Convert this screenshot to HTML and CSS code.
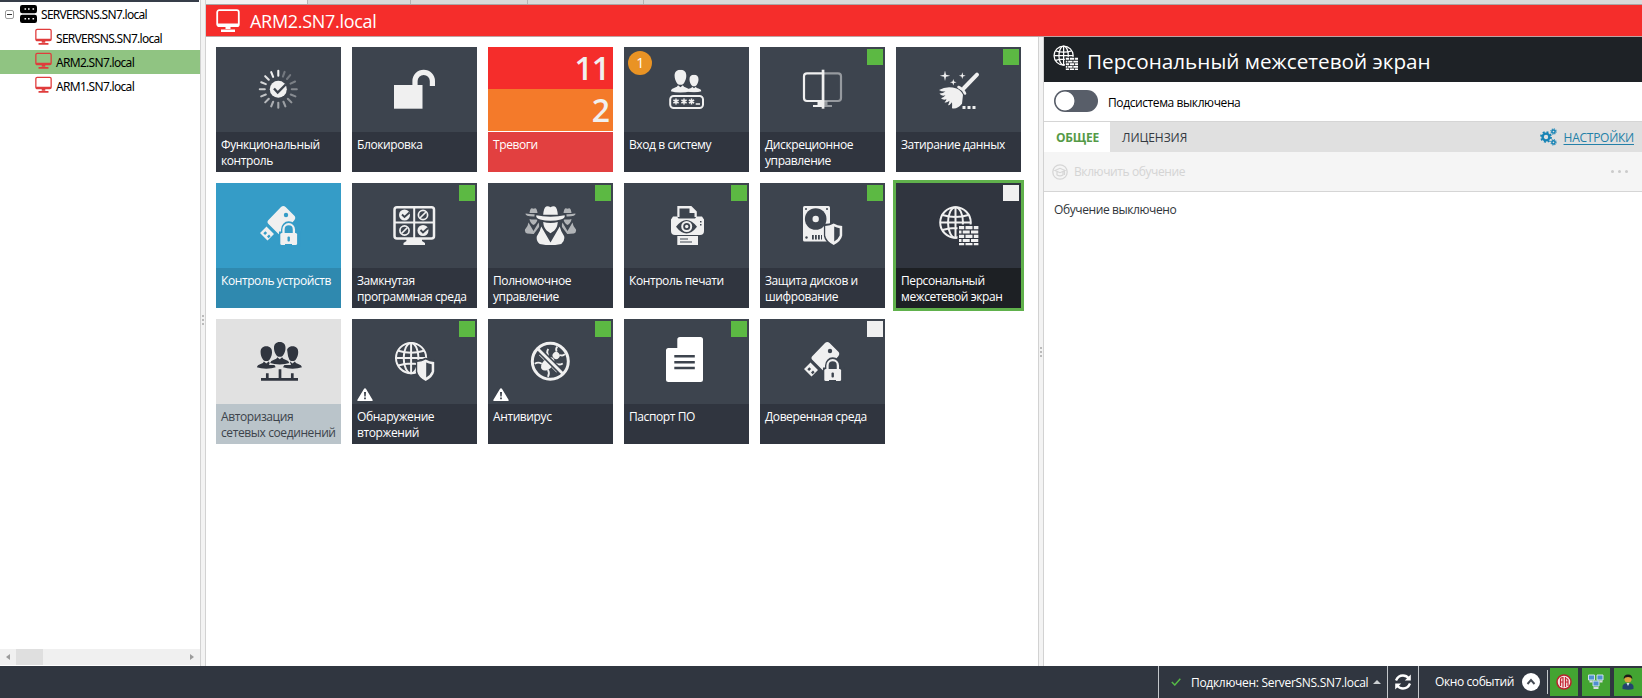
FILE: index.html
```html
<!DOCTYPE html>
<html lang="ru">
<head>
<meta charset="utf-8">
<title>ARM2.SN7.local</title>
<link rel="stylesheet" href="styles.css">
</head>
<body>
<svg class="defs" width="0" height="0">
  <symbol id="monitor" viewBox="0 0 24 24">
    <rect x="1.2" y="1.2" width="21.6" height="16" rx="2" fill="none" stroke="currentColor" stroke-width="1.8"/>
    <path d="M1.5 14.500h21v2l-1 1h-19l-1-1zM9.500 17h5v3h-5zM5 20.500h14v2.500H5z" fill="currentColor"/>
  </symbol>
  <symbol id="usb" viewBox="0 0 125 85">
    <path d="M52 37.500 65 24q2.300-2 4.600 0l9 9q1.500 2-.500 4.500L65.500 51q-1.500 1-3 0L52 40.500q-1.300-1.500 0-3zM44 50l6.500-6.500L58 51l-6.500 6.500z" fill="currentColor"/>
    <circle cx="70" cy="32" r="2.200" fill="var(--bg)"/>
    <path d="m47.300 50.200 2-2 1.800 1.800-2 2zM51 53.600l2-2 1.600 1.600-2 2z" fill="var(--bg)"/>
    <path d="M63 48.500h2v-2a7.700 8.300 0 0 1 15.400 0v2h4v15H62.500z" fill="var(--bg)"/>
    <path d="M67.500 51v-4.500a5.200 5.300 0 0 1 10.400 0V51" fill="none" stroke="currentColor" stroke-width="2.300"/>
    <rect x="64.300" y="50" width="16.800" height="12" rx="1.500" fill="currentColor"/>
    <rect x="71.500" y="53.500" width="2.400" height="5" rx="1" fill="var(--bg)"/>
    <path d="M69 61h7v2h-7z" fill="var(--bg)"/>
  </symbol>
  <symbol id="globe" viewBox="0 0 40 40">
    <g fill="none" stroke="currentColor" stroke-width="2">
      <circle cx="17" cy="17" r="15.300"/>
      <ellipse cx="17" cy="17" rx="7.500" ry="15.300"/>
      <path d="M17 2v30M2 17h30M4 9.500q13 4 26 0M4 24.500q13-4 26 0"/>
    </g>
  </symbol>
  <symbol id="shield" viewBox="0 0 20 25">
    <path d="M0 2.500Q6 2.500 10 0q4 2.500 10 2.500V14q-1 7-10 11Q1 21 0 14z" fill="var(--bg)"/>
    <path d="M1.500 4.500Q6.500 4 10 2q3.500 2 8.500 2.500V14q-1 5.500-8.500 9.500Q2.500 19.500 1.500 14z" fill="currentColor"/>
    <path d="M10.500 5q2.500 1.200 5.500 1.700V14q-1 3-5.500 6z" fill="var(--bg)"/>
  </symbol>
  <symbol id="firewall" viewBox="0 0 40 40">
    <use href="#globe" width="40" height="40"/>
    <path d="M19 19h21v21H19z" fill="var(--bg)"/>
    <path d="M20.500 20.500h5.200v3.200h-5.200zM27 20.500h7v3.200h-7zM35.300 20.500h5v3.200h-5zM20.500 25h2.500v3h-2.500zM24.200 25h7v3h-7zM32.500 25h7.500v3h-7.500zM20.500 29.200h5.200v3.200h-5.200zM27 29.200h7v3.200h-7zM35.300 29.200h5v3.200h-5zM20.500 33.600h2.500v2.800h-2.500zM24.200 33.600h7v2.800h-7zM32.500 33.600h7.500v2.800h-7.500zM20.500 37.500h5.200V40h-5.200zM27 37.500h7V40h-7zM35.300 37.500h5V40h-5z" fill="currentColor"/>
  </symbol>
  <symbol id="warn" viewBox="0 0 16 13">
    <path d="M8 .300q.700 0 1.100.800L15.700 12q.300 1-.700 1H1q-1 0-.700-1L6.900 1.100Q7.300.300 8 .300z" fill="#fff"/>
    <path d="M7 4h2l-.300 4.500H7.300zM7.100 9.500h1.800v1.800H7.100z" fill="#3d434d"/>
  </symbol>
  <symbol id="person" viewBox="0 0 20 24">
    <path d="M10 0c4 0 6.200 2.500 6 6.500 0 2.500-1 5-2 6.500-.800 1.500-1.800 2.500-4 2.500S6.800 14.500 6 13C5 11.500 4 9 4 6.500 3.800 2.500 6 0 10 0z"/>
    <path d="M0 22q.500-2.500 4-3.500 3-.700 3.500-2.500l2.500 2 2.500-2q.500 1.800 3.500 2.500 3.500 1 4 3.500-4 1.500-10 1.500T0 22z"/>
  </symbol>
  <symbol id="spy" viewBox="0 0 30 40">
    <path d="M7.500 9q.500-7 3-8.500 2.500-.500 4.500.700 2-1.200 4.500-.7 2.500 1.500 3 8.500z"/>
    <path d="M.500 9.500q6 1.500 14.500 1.500t14.500-1.500q1 3-4 4.300Q21 15 15 15T4.500 13.800Q-.500 12.500.5 9.500z"/>
    <path d="M7.500 16.500q7.500 1.800 15 0-.500 6-3.500 8.500L15 28l-4-3q-3-2.500-3.500-8.500z"/>
    <path d="M5.500 21 15 37.500 24.500 21q1 5 4.500 10 1 5-3 8-11 2.500-22 0-4-3-3-8 3.500-5 4.500-10z"/>
  </symbol>
  <symbol id="spy-side" viewBox="0 0 20 26">
    <path d="M6 5q.500-4 2-4.700 1.500 0 2 .5.500-.5 2-.5Q13.500 1 14 5z"/>
    <path d="M2 5.500q8 1.500 16 0 .500 3-8 3T2 5.500zM6 11q4 1.200 8 0-.5 4-4 6-3.500-2-4-6z"/>
    <path d="M5 14.500 10 23l5-8.500q.500 4 3.500 7 .500 3.500-2 4-6.500.8-13 0-2.500-.5-2-4 3-3 3.500-7z"/>
  </symbol>
  <symbol id="ban" viewBox="0 0 12 12"><circle cx="6" cy="6" r="4.600" fill="none" stroke="currentColor" stroke-width="1.700"/><path d="m3 9 6-6" stroke="currentColor" stroke-width="1.700"/></symbol>
  <symbol id="ok" viewBox="0 0 12 12"><circle cx="6" cy="6" r="5.500" fill="currentColor"/><path d="m3.500 5.500 2.500 2.500L11 3.500" fill="none" stroke="var(--bg)" stroke-width="1.900"/></symbol>
</svg>

<div class="app">
  <div class="workspace">
    <aside class="tree">
      <div class="tree-cap"></div>
      <ul class="tree-list">
        <li class="node root"><span class="expander"></span>
          <svg class="server" viewBox="0 0 17 18"><rect width="17" height="8.300" rx="2.200"/><rect y="9.700" width="17" height="8.300" rx="2.200"/><path d="M4.500 4h1.600M8 4h1.600M12.500 4h1.600M4.500 13.800h1.600M8 13.800h1.600M12.500 13.800h1.600" stroke="#fff" stroke-width="1.500"/></svg>
          <span>SERVERSNS.SN7.local</span></li>
        <li class="node"><svg class="pc"><use href="#monitor"/></svg><span>SERVERSNS.SN7.local</span></li>
        <li class="node selected"><svg class="pc"><use href="#monitor"/></svg><span>ARM2.SN7.local</span></li>
        <li class="node"><svg class="pc"><use href="#monitor"/></svg><span>ARM1.SN7.local</span></li>
      </ul>
      <div class="scroll"><i class="arrow-left"></i><i class="thumb"></i><i class="arrow-right"></i></div>
    </aside>
    <div class="splitter left-splitter"><i></i><i></i><i></i></div>

    <div class="main">
      <div class="top-tabs"><i class="t1"></i><i class="t2"></i><i class="t3"></i><i class="t4"></i></div>
      <header class="host"><svg class="host-icon"><use href="#monitor"/></svg><span>ARM2.SN7.local</span></header>
      <div class="content">
        <section class="tiles">
          <div class="tile"><div class="face"><svg class="icon" viewBox="0 0 125 85">
            <g stroke="currentColor" stroke-width="2.100" stroke-linecap="round" transform="translate(62.300 42.300)">
              <path d="M0-13.500V-18.500"/><path d="M0-13.500V-18.500" transform="rotate(20)" opacity=".3"/><path d="M0-13.500V-18.500" transform="rotate(40)" opacity=".3"/><path d="M0-13.500V-18.500" transform="rotate(65)" opacity=".35"/><path d="M0-13.500V-18.500" transform="rotate(90)" opacity=".4"/><path d="M0-13.500V-18.500" transform="rotate(112.500)" opacity=".42"/><path d="M0-13.500V-18.500" transform="rotate(135)" opacity=".48"/><path d="M0-13.500V-18.500" transform="rotate(157.500)" opacity=".52"/><path d="M0-13.500V-18.500" transform="rotate(180)" opacity=".58"/><path d="M0-13.500V-18.500" transform="rotate(202.500)" opacity=".62"/><path d="M0-13.500V-18.500" transform="rotate(225)" opacity=".68"/><path d="M0-13.500V-18.500" transform="rotate(247.500)" opacity=".74"/><path d="M0-13.500V-18.500" transform="rotate(270)" opacity=".8"/><path d="M0-13.500V-18.500" transform="rotate(292.500)" opacity=".86"/><path d="M0-13.500V-18.500" transform="rotate(315)" opacity=".92"/><path d="M0-13.500V-18.500" transform="rotate(337.500)"/>
            </g>
            <circle cx="62.300" cy="42.300" r="8.500" fill="currentColor"/><path d="m58 41.500 3.700 4 8-8" fill="none" stroke="var(--bg)" stroke-width="2.400"/>
          </svg></div><div class="label">Функциональный<br>контроль</div></div>

          <div class="tile"><div class="face"><svg class="icon" viewBox="0 0 125 85">
            <path d="M42 38h28.500v23.700H42z" fill="currentColor"/><path d="M63 38.500V34a8.700 8.700 0 0 1 17.400 0v5" fill="none" stroke="currentColor" stroke-width="5.200"/>
          </svg></div><div class="label">Блокировка</div></div>

          <div class="tile alarms"><div class="count high">11</div><div class="count mid">2</div><div class="label">Тревоги</div></div>

          <div class="tile"><div class="face"><span class="badge">1</span><svg class="icon" viewBox="0 0 125 85" fill="currentColor">
            <use href="#person" x="46.700" y="22.700" width="19.500" height="23.400"/>
            <use href="#person" x="62.500" y="27.500" width="15" height="18.300"/>
            <rect x="46.200" y="49" width="32.800" height="12" rx="3.500" fill="none" stroke="currentColor" stroke-width="2"/>
            <path d="M52 51.500v6M49.400 53l5.200 3M49.400 56l5.200-3M60 51.500v6M57.400 53l5.200 3M57.400 56l5.200-3M67.500 51.500v6M64.900 53l5.200 3M64.900 56l5.200-3M71.700 57h4.300" stroke="currentColor" stroke-width="1.500"/>
          </svg></div><div class="label">Вход в систему</div></div>

          <div class="tile"><div class="face"><span class="flag"></span><svg class="icon" viewBox="0 0 125 85">
            <g fill="none" stroke="currentColor"><path d="M63 26.300H47a3 3 0 0 0-3 3V51a3 3 0 0 0 3 3h16" stroke-width="2.200"/><path d="M63 26.300h15a3 3 0 0 1 3 3V51a3 3 0 0 1-3 3H63" stroke-width="2.200" opacity=".5"/></g>
            <path d="M57.500 54.500H63V60H53v-2h4.500z" fill="currentColor"/><path d="M63 54.500h4.500V58H72v2h-9z" fill="currentColor" opacity=".5"/><path d="M61.700 22.700h2.700v39h-2.700z" fill="currentColor"/>
          </svg></div><div class="label">Дискреционное<br>управление</div></div>

          <div class="tile"><div class="face"><span class="flag"></span><svg class="icon" viewBox="0 0 125 85" fill="currentColor">
            <path d="m68 41 13-13.300" stroke="currentColor" stroke-width="4" stroke-linecap="round"/>
            <path d="M62.500 40q4.500 2 6.500 6.500" fill="none" stroke="currentColor" stroke-width="2.600" stroke-linecap="round"/>
            <path d="M60.500 41.500Q51 38.500 43 43q3 2 6.500 1.500-2.500 2-6 2 1.500 3 6 1.800-1.500 2-4.500 3 2 2 5.500 1-.5 2-2 3 2 1 5-1.500-.5 3-1.500 4.500 2 0 4-3 .3 3 0 6 5 1.500 10-4.500.5-4.500 1-9-2-4.500-6.500-6.300z"/>
            <path d="M49 23.500l1 4.200 4.200 1-4.200 1-1 4.200-1-4.200-4.200-1 4.200-1zM57.300 32l.8 2.500 2.500.8-2.500.8-.8 2.500-.8-2.500-2.500-.8 2.500-.8zM66.300 25.300l.8 2.600 2.600.8-2.600.8-.8 2.600-.8-2.600-2.600-.8 2.600-.8zM66.500 59h3v3h-3zM71.500 59h3v3h-3zM76.500 59h3v3h-3z"/>
          </svg></div><div class="label">Затирание данных</div></div>

          <div class="tile blue"><div class="face"><svg class="icon"><use href="#usb"/></svg></div><div class="label">Контроль устройств</div></div>

          <div class="tile"><div class="face"><span class="flag"></span><svg class="icon" viewBox="0 0 125 85">
            <rect x="42.500" y="24.200" width="39.500" height="31.300" rx="2.500" fill="none" stroke="currentColor" stroke-width="2.500"/><path d="M62.200 24v31M42 39.500h40" stroke="currentColor" stroke-width="2"/><path d="M54 55h16v3l3 2v2H51.500v-2l3-2z" fill="currentColor"/>
            <use href="#ok" x="46.500" y="26" width="12" height="12"/><use href="#ban" x="65" y="26" width="12" height="12"/><use href="#ban" x="46.500" y="41.500" width="12" height="12"/><use href="#ok" x="65" y="41.500" width="12" height="12"/>
          </svg></div><div class="label">Замкнутая<br>программная среда</div></div>

          <div class="tile"><div class="face"><span class="flag"></span><svg class="icon" viewBox="0 0 125 85" fill="currentColor">
            <g opacity=".65"><use href="#spy-side" x="35.500" y="25" width="20" height="26"/><use href="#spy-side" x="69.500" y="25" width="20" height="26"/></g>
            <path d="M54 23h17l1.500 7 6 1v4.500L73 38l1 6 6 8v10H45V52l6-8 1-6-5.500-2.500V31l6-1z" fill="var(--bg)"/>
            <use href="#spy" x="47.500" y="23" width="30" height="39"/>
          </svg></div><div class="label">Полномочное<br>управление</div></div>

          <div class="tile"><div class="face"><span class="flag"></span><svg class="icon" viewBox="0 0 125 85">
            <path d="M53.300 23h14l5.500 5.500V34H53.300z" fill="currentColor"/><path d="M55.500 25.500h10v4.500h5V35h-15z" fill="var(--bg)"/>
            <path d="M49 33.500h4l1.500 2h16.500l1.500-2H78l2 3V48q0 4-4 4H51q-4 0-4-4V36.500z" fill="currentColor"/>
            <path d="M52 43.700q10.500-13.500 21 0-10.500 13.500-21 0z" fill="var(--bg)"/><circle cx="62.700" cy="43.500" r="4.500" fill="none" stroke="currentColor" stroke-width="2"/><circle cx="62.700" cy="43.500" r="1.700" fill="currentColor"/><path d="M76 38h1.500v1.500H76zM76 41h1.500v1.500H76z" fill="var(--bg)"/>
            <path d="M53.300 53h20.700v9H53.300z" fill="currentColor"/><path d="M56 56h8M56 59h12" stroke="var(--bg)" stroke-width="1.200"/>
          </svg></div><div class="label">Контроль печати</div></div>

          <div class="tile"><div class="face"><span class="flag"></span><svg class="icon" viewBox="0 0 125 85">
            <rect x="43" y="23" width="27" height="35.500" rx="1.500" fill="currentColor"/><g fill="var(--bg)"><circle cx="55.700" cy="36" r="10.800"/><circle cx="46" cy="26" r="1"/><circle cx="67" cy="26" r="1"/><circle cx="46.500" cy="54.500" r="1.200"/><path d="M52 52h1.800v4.500H52zM55 52h1.800v4.500H55zM58 52h1.800v4.500H58zM61 52h1v4.500h-1z"/></g><circle cx="55.700" cy="36" r="3.200" fill="currentColor"/>
            <use href="#shield" x="63.700" y="38.500" width="20" height="25"/>
          </svg></div><div class="label">Защита дисков и<br>шифрование</div></div>

          <div class="tile current"><div class="face"><span class="flag off"></span><svg class="icon" viewBox="0 0 125 85"><use href="#firewall" x="42.500" y="22.500" width="40" height="40"/></svg></div><div class="label">Персональный<br>межсетевой экран</div></div>

          <div class="tile light"><div class="face"><svg class="icon" viewBox="0 0 125 85" fill="currentColor">
            <use href="#person" x="40.800" y="27" width="19" height="23.500"/><use href="#person" x="67" y="27" width="19" height="23.500"/>
            <path d="M58 23h12l2 14 3 9H53l3-9z" fill="var(--bg)"/><use href="#person" x="54" y="23" width="19.500" height="23"/>
            <path d="M45 60.300h37M51.300 54.300v6M64 50.300v10M76.300 54.300v6" fill="none" stroke="currentColor" stroke-width="2.700"/>
          </svg></div><div class="label">Авторизация<br>сетевых соединений</div></div>

          <div class="tile"><div class="face"><span class="flag"></span><svg class="warn"><use href="#warn"/></svg><svg class="icon" viewBox="0 0 125 85"><use href="#globe" x="42.300" y="22.300" width="39.500" height="39.500"/><use href="#shield" x="63.700" y="38.500" width="20" height="25"/></svg></div><div class="label">Обнаружение<br>вторжений</div></div>

          <div class="tile"><div class="face"><span class="flag"></span><svg class="warn"><use href="#warn"/></svg><svg class="icon" viewBox="0 0 125 85">
            <g transform="rotate(45 62.300 42.300)" fill="currentColor"><ellipse cx="62.300" cy="46" rx="5" ry="8"/><ellipse cx="62.300" cy="34" rx="3.600" ry="3.500"/><path d="M60 31q-3-1-3-4M64.600 31q3-1 3-4M57 40q-4-1-5-5M67.600 40q4-1 5-5M57 45h-7M67.600 45h7M58 50q-4 1-5 5M66.600 50q4 1 5 5" fill="none" stroke="currentColor" stroke-width="1.800"/></g>
            <path d="m49 29 26.600 26.600" stroke="var(--bg)" stroke-width="6"/>
            <circle cx="62.300" cy="42.300" r="18" fill="none" stroke="currentColor" stroke-width="3"/><path d="m49.500 29.500 25.600 25.600" stroke="currentColor" stroke-width="2.800"/>
          </svg></div><div class="label">Антивирус</div></div>

          <div class="tile"><div class="face"><span class="flag"></span><svg class="icon" viewBox="0 0 125 85">
            <path d="M56 18h20.500q2.500 0 2.500 2.500v40q0 2.500-2.500 2.500h-32Q42 63 42 60.500v-29Q42 29 44.500 29H53.300v-8.300Q53.300 18 56 18z" fill="#fff"/><path d="M50.300 37.300h20.500M50.300 43.300h20.500M50.300 49h20.500" stroke="var(--bg)" stroke-width="2.600"/>
          </svg></div><div class="label">Паспорт ПО</div></div>

          <div class="tile"><div class="face"><span class="flag off"></span><svg class="icon"><use href="#usb"/></svg></div><div class="label">Доверенная среда</div></div>
        </section>

        <div class="splitter"><i></i><i></i><i></i></div>

        <section class="details">
          <h1 class="details-head"><svg class="head-icon"><use href="#firewall"/></svg><span>Персональный межсетевой экран</span></h1>
          <div class="switch-row"><span class="toggle"></span><span>Подсистема выключена</span></div>
          <nav class="tabs"><span class="tab active">ОБЩЕЕ</span><span class="tab">ЛИЦЕНЗИЯ</span>
            <svg class="gears" viewBox="0 0 17 18" fill="none" stroke="#1783b5"><circle cx="6" cy="9" r="3.400" stroke-width="2.400"/><circle cx="6" cy="9" r="5" stroke-width="1.800" stroke-dasharray="1.960"/><circle cx="13.500" cy="3.500" r="1.600" stroke-width="1.500"/><circle cx="13.500" cy="3.500" r="2.600" stroke-width="1.200" stroke-dasharray="1.020"/><circle cx="13.500" cy="14.300" r="1.600" stroke-width="1.500"/><circle cx="13.500" cy="14.300" r="2.600" stroke-width="1.200" stroke-dasharray="1.020"/></svg>
            <a class="settings">НАСТРОЙКИ</a></nav>
          <div class="toolbar"><svg class="learn" viewBox="0 0 16 16" fill="none" stroke="#d6d6d6"><circle cx="8" cy="8" r="7.200" stroke-width="1.300"/><path d="m3 6.500 5-2.200 5 2.200-5 2.200zM5 8v3q3 1.700 6 0V8M12.500 7v4" stroke-width="1.200"/></svg><span>Включить обучение</span><span class="more"><i></i><i></i><i></i></span></div>
          <p class="note">Обучение выключено</p>
        </section>
      </div>
    </div>
  </div>

  <footer class="status">
    <div class="conn"><svg class="check" viewBox="0 0 10 8"><path d="m.800 4 3 3L9.300.800" fill="none" stroke="#56b947" stroke-width="1.500"/></svg><span class="conn-text">Подключен: ServerSNS.SN7.local</span><i class="up"></i></div>
    <div class="refresh"><svg viewBox="0 0 18 16" fill="none" stroke="#fff" stroke-width="2.300"><path d="M2 6.500Q4 1.500 9 1.500q3.500 0 6 3M16 9.500q-2 5-7 5-3.500 0-6-3"/><path d="M16.800.500v6h-6zM1.200 15.500v-6h6z" fill="#fff" stroke="none"/></svg></div>
    <div class="events"><span class="events-text">Окно событий</span><svg class="round" viewBox="0 0 18 18"><circle cx="9" cy="9" r="9" fill="#fff"/><path d="m5.500 11 3.500-4 3.500 4" fill="none" stroke="#444a53" stroke-width="1.900"/></svg></div>
    <div class="indicators">
      <span class="ind"><svg viewBox="0 0 16 16"><circle cx="8" cy="8" r="7" fill="#f8e4e4" stroke="#b9202c" stroke-width="1.500"/><path d="M7 3v10.500M4.500 12V5.500Q4.500 3.500 7 3.500M4.500 8H7M9.500 3v10M9.500 4.500q2.500 0 2.500 2V12M9.500 8H12" fill="none" stroke="#c22431" stroke-width="1.200"/></svg></span>
      <span class="ind"><svg viewBox="0 0 16 16"><g fill="#4f8fd0" stroke="#cfe2ee"><path d="M.500 1h6v5h-6zM9 1h6v5H9zM5 7h6v5H5z"/></g><path d="M1.500 7.500h3M11.500 7.500h3M5.500 14h5" stroke="#d7dde0" stroke-width="2"/></svg></span>
      <span class="ind"><svg viewBox="0 0 16 16"><circle cx="8" cy="5" r="3.600" fill="#dba33d"/><path d="M3.700 5Q3.500.500 8 .500T12.300 5Q11 3 8 3T3.700 5z" fill="#1d1a18"/><path d="M2.500 15V12q1-3 5.500-3t5.500 3v3q-5 1.500-11 0z" fill="#23446e"/><path d="m6.500 9 1.500 3 1.500-3z" fill="#dce6ef"/></svg></span>
    </div>
  </footer>
</div>
</body>
</html>
```
FILE: styles.css
```css
* { box-sizing: border-box; }
body { margin: 0; font-family: "Open Sans", "Noto Sans", sans-serif; font-size: 12px; letter-spacing: -0.4px; background: #fff; color: #000; }
svg { flex: none; }
.defs { position: absolute; }
.app { width: 1642px; height: 698px; display: flex; flex-direction: column; overflow: hidden; }
.workspace { flex: 1; display: flex; min-height: 0; }

.tree { width: 200px; display: flex; flex-direction: column; padding-bottom: 1px; }
.tree-cap { width: 199px; height: 2px; background: #363d49; }
.tree-list { list-style: none; margin: 0; padding: 0; flex: 1; font-family: "Noto Sans", sans-serif; font-size: 12px; letter-spacing: -0.7px; }
.node { height: 24px; display: flex; align-items: center; padding-left: 35px; gap: 4px; white-space: nowrap; }
.node.selected { background: #90c482; }
.node.root { padding-left: 5px; gap: 0; }
.node span { padding-top: 1px; }
.pc { width: 17px; height: 18px; color: #e03c3c; margin-top: -3px; }
.expander { width: 9px; height: 9px; border: 1px solid #9a9a9a; border-radius: 2px; background: linear-gradient(#333, #333) center / 5px 1px no-repeat; margin-right: 6px; }
.server { width: 17px; height: 18px; margin-right: 4px; }
.scroll { height: 16px; background: #f0f0f0; display: flex; align-items: center; padding: 0 6px; }
.arrow-left, .arrow-right { border: 3px solid transparent; border-width: 3px 4px 3px 0; border-right-color: #9b9b9b; }
.arrow-right { border-width: 3px 0 3px 4px; border-left-color: #9b9b9b; margin-left: auto; }
.thumb { width: 27px; height: 16px; background: #dfdfdf; margin-left: 6px; }

.splitter { width: 6px; background: #f3f3f3; border: 1px solid #d2d2d2; border-width: 0 1px; display: flex; flex-direction: column; align-items: center; justify-content: center; gap: 2px; }
.splitter i { width: 2px; height: 2px; background: #bbb; }
.left-splitter { padding-bottom: 27px; }

.main { flex: 1; display: flex; flex-direction: column; }
.top-tabs { height: 5px; display: flex; background: #d9d9d9; border-bottom: 1px solid #aaa5a5; }
.top-tabs i { border-right: 1px solid #b4b4b4; }
.t1 { width: 102px; background: #f2f2f2; }
.t2 { width: 103px; }
.t3 { width: 117px; }
.t4 { width: 116px; }
.host { height: 32px; background: #f52d2b; border-bottom: 1px solid #bfa3a3; color: #fff; display: flex; align-items: center; padding: 0 0 0 10px; gap: 10px; font-size: 18px; letter-spacing: -0.3px; }
.host-icon { width: 24px; height: 24px; }
.content { flex: 1; display: flex; }

.tiles { width: 832px; padding: 10px 0 0 10px; display: grid; grid-template-columns: repeat(6, 125px); grid-auto-rows: 125px; gap: 11px; align-content: start; }
.tile { --bg: #3d444e; color: #f0f0f0; background: var(--bg); display: flex; flex-direction: column; }
.face { height: 85px; position: relative; }
.icon { width: 125px; height: 85px; display: block; }
.label { height: 40px; background: #30353f; padding: 5px 0 0 5px; line-height: 16px; color: #fff; white-space: nowrap; }
.flag { position: absolute; top: 2px; right: 2px; width: 16px; height: 16px; background: #5cb943; }
.flag.off { background: #f0f0f0; }
.warn { position: absolute; left: 5px; bottom: 3px; width: 16px; height: 13px; }
.badge { position: absolute; left: 4px; top: 4px; width: 24px; height: 24px; border-radius: 50%; background: #e99324; color: #fff; text-align: center; line-height: 23px; font-size: 14px; }
.alarms { background: #fff; }
.count { height: 42px; text-align: right; padding-right: 4px; font-size: 32px; font-weight: 600; line-height: 41px; letter-spacing: -1px; }
.high { background: #f52d2b; }
.mid { background: #f47a2a; margin-bottom: 1px; }
.alarms .label { background: #e24040; }
.blue { --bg: #359cc7; }
.blue .label { background: #2f89af; }
.light { --bg: #e1e1e1; color: #30353f; }
.light .label { background: #bac4ca; color: #3c434b; }
.current { --bg: #30353f; outline: 3px solid #60b14c; }
.current .label { background: #1d2024; }

.details { flex: 1; display: flex; flex-direction: column; }
.details-head { margin: 0; height: 45px; background: #1e2226; color: #fff; display: flex; align-items: center; padding: 3px 0 0 9px; gap: 9px; font-size: 20.7px; font-weight: 400; letter-spacing: 0; }
.head-icon { width: 25px; height: 25px; --bg: #1e2226; margin-top: -7px; }
.switch-row { height: 40px; border-bottom: 1px solid #d5d5d5; display: flex; align-items: center; padding: 0 0 1px 10px; gap: 10px; }
.toggle { width: 44px; height: 22px; border-radius: 11px; background: radial-gradient(circle at 11px 11px, #fff 9px, #585e69 9.8px); }
.switch-row span + span { padding-top: 3px; }
.tabs { height: 30px; background: #e0e0e0; display: flex; align-items: center; padding-right: 8px; font-size: 12px; letter-spacing: -0.05px; }
.tab { height: 30px; line-height: 31px; padding: 0 12px; color: #333940; }
.tab.active { width: 66px; background: #fff; color: #559a47; font-weight: 700; letter-spacing: -0.2px; }
.gears { width: 17px; height: 18px; margin-left: auto; margin-right: 7px; }
.settings { color: #2480a8; text-decoration: underline; text-underline-offset: 2px; letter-spacing: -0.25px; }
.toolbar { height: 40px; background: #f5f5f5; border-bottom: 1px solid #d5d5d5; color: #d4d4d4; display: flex; align-items: center; padding: 0 14px 0 8px; gap: 6px; }
.learn { width: 16px; height: 16px; }
.more { margin-left: auto; display: flex; gap: 4px; }
.more i { width: 3px; height: 3px; border-radius: 50%; background: #cbcbcb; }
.note { margin: 9px 0 0 10px; line-height: 18px; color: #30353a; }

.status { height: 32px; background: #303640; color: #fff; display: flex; justify-content: flex-end; }
.conn { width: 229px; border-left: 1px solid #c3c7cb; display: flex; align-items: center; padding: 0 6px 0 12px; letter-spacing: -0.3px; }
.check { width: 10px; height: 8px; margin-right: 10px; }
.conn-text { white-space: nowrap; }
.up { margin-left: auto; border: 4px solid transparent; border-top: 0; border-bottom-color: #ccd0d3; }
.refresh { width: 32px; border: 1px solid #c3c7cb; border-width: 0 1px; display: flex; align-items: center; justify-content: center; }
.refresh svg { width: 18px; height: 16px; }
.events { width: 129px; display: flex; align-items: center; padding: 0 7px 1px 16px; border-right: 1px solid #c3c7cb; justify-content: space-between; margin: 4px 0; white-space: nowrap; }
.round { width: 18px; height: 18px; }
.indicators { display: flex; gap: 4px; padding: 2px 0 0 2px; }
.ind { width: 28px; height: 28px; background: #43a432; display: flex; align-items: center; justify-content: center; }
.ind svg { width: 16px; height: 16px; }
```
